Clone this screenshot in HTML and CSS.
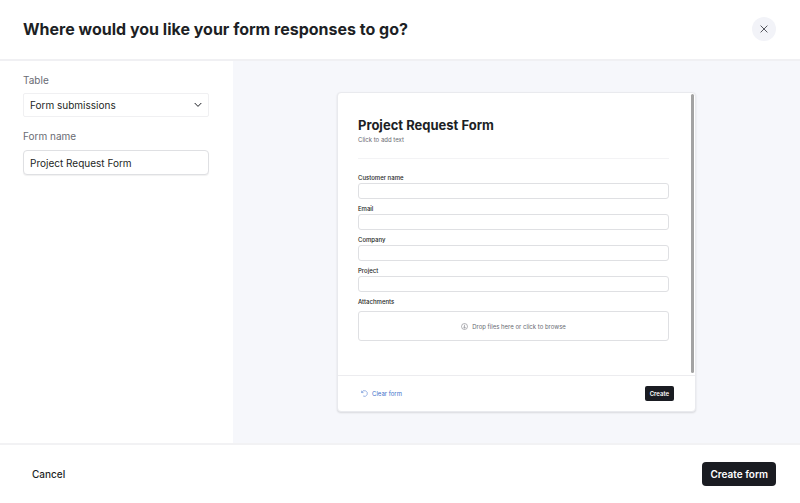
FILE: index.html
```
<!DOCTYPE html>
<html lang="en">
<head>
  <meta charset="UTF-8" />
  <title>Create form</title>
  <meta name="viewport" content="width=device-width, initial-scale=1.0" />
  <link rel="stylesheet" href="styles.css">
</head>
<body>
  <header class="header">
    <h1>Where would you like your form responses to go?</h1>
    <button class="close" type="button" aria-label="Close">
      <svg width="8" height="8" viewBox="0 0 8 8"><path d="M.6.6l6.8 6.8M7.4.6L.6 7.4" /></svg>
    </button>
  </header>

  <main class="main">
    <form class="sidebar">
      <label for="table">Table</label>
      <div class="select">
        <select id="table">
          <option>Form submissions</option>
        </select>
        <svg width="8" height="6" viewBox="0 0 8 6"><path d="M.7 1L4 4.4 7.3 1" /></svg>
      </div>
      <label for="form-name">Form name</label>
      <input class="name-input" id="form-name" type="text" value="Project Request Form">
    </form>

    <section class="preview">
      <div class="card">
        <div class="card-body">
          <div class="card-content">
            <h2>Project Request Form</h2>
            <p class="hint">Click to add text</p>
            <hr>
            <div class="field">
              <label for="customer">Customer name</label>
              <input id="customer" type="text">
            </div>
            <div class="field">
              <label for="email">Email</label>
              <input id="email" type="text">
            </div>
            <div class="field">
              <label for="company">Company</label>
              <input id="company" type="text">
            </div>
            <div class="field">
              <label for="project">Project</label>
              <input id="project" type="text">
            </div>
            <div class="field attachments">
              <label for="drop">Attachments</label>
              <button class="drop" id="drop" type="button">
                <svg width="7" height="7" viewBox="0 0 14 14"><circle cx="7" cy="7" r="6" /><path d="M7 3.4v7M4.4 7.8L7 10.4l2.6-2.6" /></svg>
                Drop files here or click to browse
              </button>
            </div>
          </div>
          <div class="scrollbar"></div>
        </div>
        <div class="card-footer">
          <button class="clear" type="button">
            <svg width="7" height="7" viewBox="0 0 14 14"><path d="M1.2 1.4v3.8H5M1.6 5A5.7 5.7 0 1 1 4.2 12" /></svg>
            Clear form
          </button>
          <button class="create" type="button">Create</button>
        </div>
      </div>
    </section>
  </main>

  <footer class="footer">
    <button class="cancel" type="button">Cancel</button>
    <button class="submit" type="button">Create form</button>
  </footer>
</body>
</html>
```

FILE: styles.css
```
:root {
  --text: #1d1f25;
  --muted: #696b73;
  --line: #ececef;
  --field: #dfe0e3;
  --pane: #f6f7fb;
  --dark: #1a1c22;
  --link: #3c6fcb;
}

* {
  box-sizing: border-box;
}

body {
  margin: 0;
  min-height: 100vh;
  display: flex;
  flex-direction: column;
  background: #fff;
  color: var(--text);
  font-family: Inter, "Liberation Sans", sans-serif;
  font-size: 10px;
}

button,
input,
select {
  font: inherit;
  color: inherit;
}

button {
  border: none;
  background: none;
  padding: 0;
  cursor: pointer;
}

svg {
  display: block;
  flex: none;
  fill: none;
  stroke: currentColor;
}

.header {
  display: flex;
  justify-content: space-between;
  align-items: center;
  height: 61px;
  padding: 0 24px 2px 23px;
  border-bottom: 2px solid #f0f0f3;
}

h1 {
  margin: 0;
  font-size: 16px;
  font-weight: 700;
}

.close {
  display: grid;
  place-items: center;
  width: 24px;
  height: 24px;
  border-radius: 50%;
  background: #f2f3f8;
  color: #55575f;
}

.main {
  flex: 1;
  display: flex;
}

.sidebar {
  width: 233px;
  padding: 12px 24px 12px 23px;
}

.sidebar label {
  display: block;
  line-height: 14px;
  color: var(--muted);
}

.select {
  display: flex;
  align-items: center;
  height: 24px;
  margin: 6px 0 12px;
  padding: 0 6px;
  border: 1px solid #f0f0f2;
  border-radius: 2px;
}

.select select {
  flex: 1;
  appearance: none;
  padding: 0;
  border: none;
  background: none;
}

.name-input {
  width: 100%;
  height: 25px;
  margin-top: 7px;
  padding: 0 6px;
  border: 1px solid var(--field);
  border-radius: 4px;
  box-shadow: 0 1px 1px rgba(0, 0, 0, 0.06);
}

.preview {
  flex: 1;
  display: grid;
  place-items: center;
  padding: 24px;
  background: var(--pane);
}

.card {
  width: 100%;
  max-width: 359px;
  border: 1px solid #e9eaee;
  border-radius: 4px;
  background: #fff;
  box-shadow: 0 1px 2px rgba(0, 0, 0, 0.12);
  font-size: 6px;
}

.card-body {
  display: flex;
}

.card-content {
  flex: 1;
  padding: 23px 22px 34px 20px;
}

.scrollbar {
  width: 3px;
  margin: 1px 1px 2px 0;
  border-radius: 2px;
  background: #a3a3a3;
}

h2 {
  margin: 0;
  font-size: 13px;
  line-height: 18px;
  font-weight: 700;
}

.hint {
  margin: 2px 0 14px;
  line-height: 8px;
  color: var(--muted);
}

hr {
  margin: 0 0 15px;
  border: none;
  border-top: 1px solid #f3f3f5;
}

.field {
  margin-bottom: 5px;
}

.field label {
  display: block;
  margin-bottom: 1px;
  line-height: 8px;
  font-weight: 500;
}

.field input,
.drop {
  display: block;
  width: 100%;
  height: 16px;
  padding: 0 4px;
  border: 1px solid var(--field);
  border-radius: 3px;
  background: #fff;
}

.field + .field {
  margin-top: 6px;
}

.attachments {
  margin-bottom: 0;
}

.field.attachments label {
  margin-bottom: 5px;
}

.drop {
  display: flex;
  justify-content: center;
  align-items: center;
  gap: 4px;
  height: 30px;
  color: var(--muted);
}

.card-footer {
  display: flex;
  justify-content: space-between;
  align-items: center;
  height: 36px;
  padding: 0 21px 0 23px;
  border-top: 1px solid var(--line);
}

.clear {
  display: flex;
  align-items: center;
  gap: 4px;
  color: var(--link);
}

.create {
  height: 15px;
  padding: 0 5px;
  border-radius: 2px;
  background: var(--dark);
  color: #fff;
  font-weight: 600;
}

.footer {
  display: flex;
  justify-content: space-between;
  align-items: center;
  height: 60px;
  padding: 0 24px 0 23px;
  border-top: 2px solid #f2f2f4;
}

.cancel,
.submit {
  height: 24px;
  padding: 0 9px;
  border-radius: 4px;
  font-weight: 500;
}

.submit {
  padding: 0 8px;
  background: var(--dark);
  color: #fff;
  font-weight: 600;
}
```
